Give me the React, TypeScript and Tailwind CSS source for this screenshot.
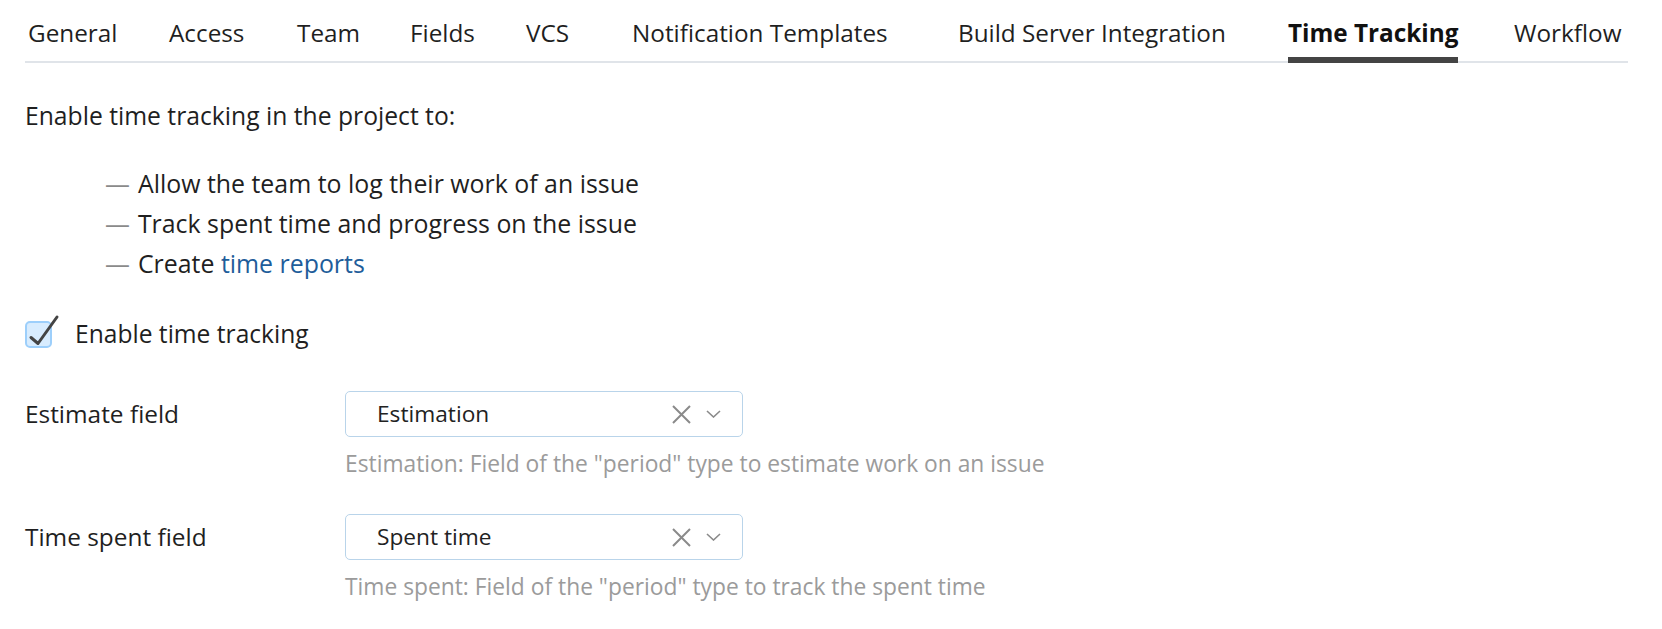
const tabs = [
  { label: 'General', w: 'w-[141px]' },
  { label: 'Access', w: 'w-[128px]' },
  { label: 'Team', w: 'w-[113px]' },
  { label: 'Fields', w: 'w-[116px]' },
  { label: 'VCS', w: 'w-[106px]' },
  { label: 'Notification Templates', w: 'w-[326px]' },
  { label: 'Build Server Integration', w: 'w-[330px]' },
  { label: 'Time Tracking', w: 'w-[226px]', active: true },
  { label: 'Workflow', w: 'w-auto' },
];

function Select({ value }: { value: string }) {
  return (
    <div className="flex h-[46px] w-[398px] items-center rounded-[5px] border-[1.5px] border-[#b9d4ea] bg-white pl-[31px] pr-[21px]">
      <span className="flex-1 text-[22.7px] text-[#222]">{value}</span>
      {/* clear */}
      <svg width="19" height="19" viewBox="0 0 19 19" fill="none">
        <path d="M1 1 L18 18 M18 1 L1 18" stroke="#8a8a8a" strokeWidth="2" />
      </svg>
      {/* chevron */}
      <svg className="ml-[15px]" width="15" height="8" viewBox="0 0 15 8" fill="none">
        <path d="M1 1 L7.5 7 L14 1" stroke="#8a8a8a" strokeWidth="1.6" />
      </svg>
    </div>
  );
}

function FieldRow({ label, value, hint, className }: { label: string; value: string; hint: string; className?: string }) {
  return (
    <div className={'grid grid-cols-[320px_1fr] ' + (className ?? '')}>
      <div className="flex h-[46px] items-center text-[24.4px]">{label}</div>
      <div>
        <Select value={value} />
        <div className="mt-[12px] text-[22.8px] leading-[30px] text-[#9b9b9b]">{hint}</div>
      </div>
    </div>
  );
}

export default function App() {
  return (
    <div className="h-[629px] w-[1662px] overflow-hidden bg-white font-['Open_Sans',sans-serif] text-[#1f1f1f]">
      <div className="pl-[25px] pr-[34px]">
        <nav className="flex items-end border-b-2 border-[#e0e4e9] pt-[17px] pl-[3px]">
          {tabs.map((t) => (
            <div key={t.label} className={t.w}>
              <span
                className={
                  'inline-block -mb-[2px] border-b-[6px] pb-[9px] text-[24.3px] leading-[31px] ' +
                  (t.active ? 'border-[#444] font-bold text-[#111]' : 'border-transparent')
                }
              >
                {t.label}
              </span>
            </div>
          ))}
        </nav>

        <p className="mt-[38px] text-[24.7px] leading-[30px]">Enable time tracking in the project to:</p>

        <ul className="mt-[32px] pl-[80px] text-[24.9px] leading-[40px]">
          <li>
            <span className="mr-[8px] text-[#8a8a8a]">—</span>Allow the team to log their work of an issue
          </li>
          <li>
            <span className="mr-[8px] text-[#8a8a8a]">—</span>Track spent time and progress on the issue
          </li>
          <li>
            <span className="mr-[8px] text-[#8a8a8a]">—</span>Create <a className="text-[#1e5d9a]">time reports</a>
          </li>
        </ul>

        <label className="mt-[36px] flex items-center gap-[23px]">
          <span className="relative block h-[27px] w-[27px] rounded-[5px] border-2 border-[#9dcffb] bg-[#d8ecfe]">
            <svg className="absolute left-0 top-0 overflow-visible" width="27" height="27" viewBox="0 0 27 27" fill="none">
              <path d="M4 14.5 L11 20.5 L30 -6" stroke="#444" strokeWidth="3" strokeLinecap="round" strokeLinejoin="round" />
            </svg>
          </span>
          <span className="text-[24.6px] leading-[30px]">Enable time tracking</span>
        </label>

        <FieldRow
          className="mt-[42px]"
          label="Estimate field"
          value="Estimation"
          hint={'Estimation: Field of the "period" type to estimate work on an issue'}
        />
        <FieldRow
          className="mt-[35px]"
          label="Time spent field"
          value="Spent time"
          hint={'Time spent: Field of the "period" type to track the spent time'}
        />
      </div>
    </div>
  );
}
